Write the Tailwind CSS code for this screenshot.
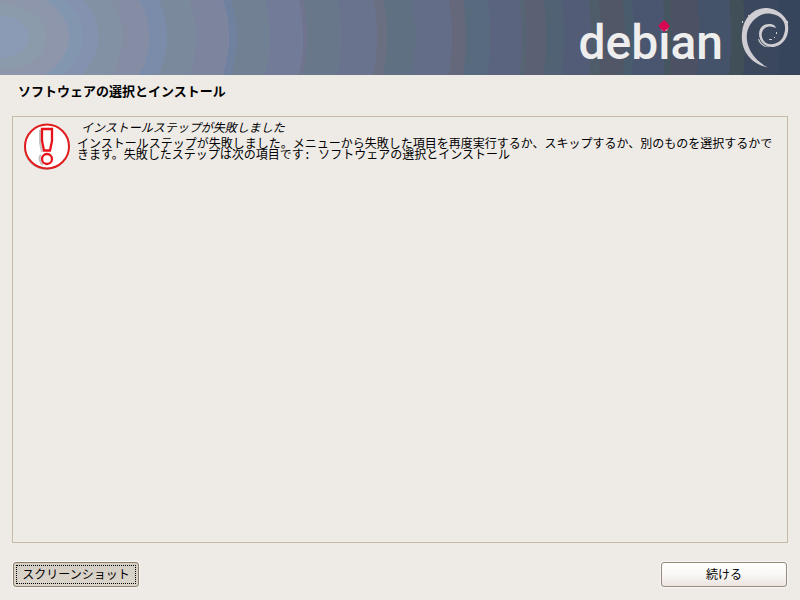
<!DOCTYPE html>
<html lang="ja">
<head>
    <meta charset="UTF-8">
    <meta name="viewport" content="width=device-width, initial-scale=1.0">
    <title>Debian インストーラ</title>
    <script src="https://cdn.jsdelivr.net/npm/@tailwindcss/browser@4"></script>
</head>
<body class="flex min-h-screen flex-col bg-[#eeebe7] font-['Noto_Sans_CJK_JP',sans-serif] text-xs text-black">
    <!-- banner -->
    <header class="flex h-[75px] justify-end bg-[radial-gradient(800px_570px_at_0px_37px,#8b9bb5_28px,#8b9bab_30px_46px,#8e96ac_46px_69px,#8297af_69px_83px,#8492b0_83px_98px,#8292a4_98px_122px,#858da5_122px_149px,#7a8ca9_149px_167px,#7a899c_167px_196px,#7c849e_196px_229px,#7081a0_229px_237px,#728093_237px_270px,#727b97_270px_303px,#71748f_303px_307px,#68788a_307px_341px,#6a738e_341px_377px,#6b6f82_377px_387px,#5f7083_387px_415px,#636d87_415px_452px,#65687b_452px_466px,#586a7d_466px_490px,#5a647e_490px_522px,#566473_522px_527px,#5b6073_527px_546px,#516275_546px_564px,#525c76_564px_591px,#4f5c69_591px_601px,#525768_601px_625px,#485c6d_625px_634px,#4a5670_634px_665px,#465661_665px_672px,#4c5163_672px_699px,#44536a_699px_731px,#414f59_731px_745px,#3b475c_745px_780px,#36445c_780px)] pr-2.5">
        <h1 class="pr-[18px] font-['Roboto',sans-serif] text-[48px] leading-[86px] font-medium text-[#eee]">deb<span class="relative">i<svg class="absolute top-1.5 left-0 h-3 w-full" viewBox="0 0 12 12" aria-hidden="true">
            <path d="M6 0L8.500 2.500H9.500V3.500L12 6L9.500 8.500V9.500H8.500L6 12L3.500 9.500H2.500V8.500L0 6L2.500 3.500V2.500H3.500Z" fill="#d70751"/>
        </svg></span>an</h1>
        <svg class="mt-2 h-[60px] w-[49px]" viewBox="0 0 49 60" fill="#d0ced2" aria-hidden="true">
            <path d="M1 25C2 11 11 1 24 0C33 -0.500 42 5 46 13C50 25 44 37 33 39C25 40 18 34 18 26C18 19 23 16 28 16C32 16 34 17 35 20C31 18 27 18 24 20C19 24 20 31 25 35C31 38 39 35 42 29C47 18 43 8 31 6C19 3 8 14 6 25C4 40 14 53 27 59.500C13 57 -1 45 1 25Z"/>
            <path d="M17 31L18 31C20 36 25 39 29 39C23 40 18 36 17 31ZM44 13H47V16L45 15ZM28 31H31V32H28ZM35 24H36V26H35ZM33 29H34V30H33ZM1 13H2V15H1ZM7 7H8V8H7Z"/>
        </svg>
    </header>

    <h2 class="px-[18px] pt-1.5 pb-[15px] text-[13px] leading-5 font-bold">ソフトウェアの選択とインストール</h2>

    <main class="mx-3 flex flex-1 items-start border border-[#c6b9a6] py-1.5 pr-2 pl-2.5">
        <svg class="size-12 shrink-0" viewBox="0 0 48 48" fill="none" aria-hidden="true">
            <circle cx="23" cy="25" r="22" fill="#c6c3c1"/>
            <circle cx="24" cy="23.500" r="22" fill="#fff" stroke="#e01b1b" stroke-width="2"/>
            <path d="M17 7V20L19 29M18 32C15 35 17 40 20 42" stroke="#c4c4c4" stroke-width="2"/>
            <path d="M19 6H29V18L27 27.500H21L19 18Z" fill="#fff" stroke="#e8131a" stroke-width="2.300"/>
            <circle cx="24" cy="36" r="5" fill="#fff" stroke="#e8131a" stroke-width="2.300"/>
        </svg>
        <div class="flex-1 pl-1.5 font-['Liberation_Mono','Noto_Sans_CJK_JP',monospace]">
            <p class="pl-1 leading-3 italic">インストールステップが失敗しました</p>
            <p class="pt-[5px] leading-[11px]">インストールステップが失敗しました。メニューから失敗した項目を再度実行するか、スキップするか、別のものを選択するかできます。失敗したステップは次の項目です: ソフトウェアの選択とインストール</p>
        </div>
    </main>

    <footer class="flex justify-between px-[13px] pt-[19px] pb-[13px]">
        <button type="button" class="h-[25px] w-[126px] rounded-[3px] border border-[#8f7e6c] bg-linear-to-b from-[#d5cec5] to-[#dcd5cc] p-0.5 shadow-[0_0_1px_1px_#f7f5f3]">
            <span class="flex h-full items-center justify-center border border-dotted border-black pb-0.5">スクリーンショット</span>
        </button>
        <button type="button" class="h-[25px] w-[126px] rounded-[3px] border border-[#9a8b7a] bg-linear-to-b from-white via-[#f8f7f6] to-[#ebe4e1] pb-0.5 shadow-[0_0_1px_1px_#f7f5f3]">続ける</button>
    </footer>
</body>
</html>
